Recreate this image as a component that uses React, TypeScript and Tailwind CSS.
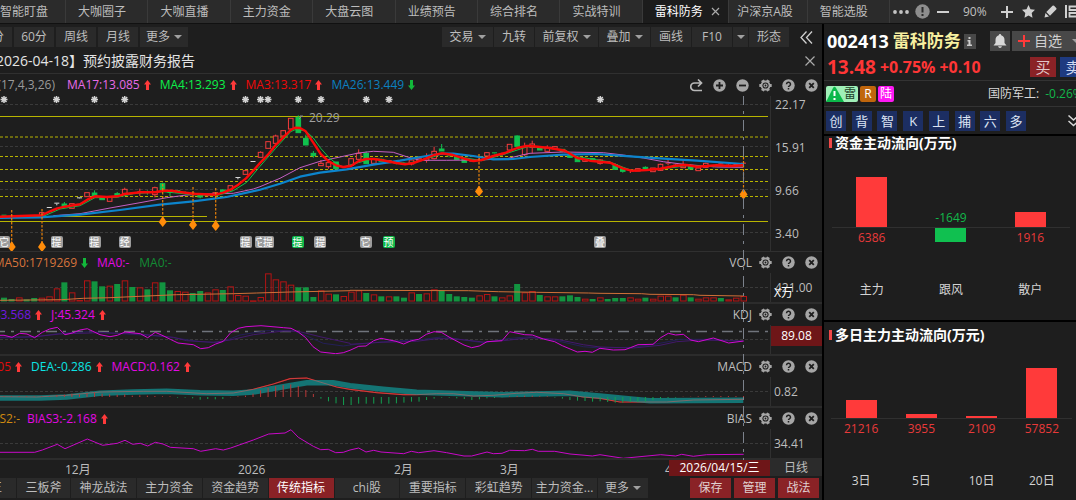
import React from "react";

type Pt = [number, number];
type Dir = "up" | "down";

const CHART_W = 770;
const barX = (i: number) => 4 + i * 7.546;

/* Series samples are stored at three units per pixel, relative to a segment origin. */
const seg = (ox: number, oy: number, pts: Pt[]): Pt[] => pts.map(([x, y]) => [ox + x / 3, oy + y / 3]);
const toPoints = (pts: Pt[]) => pts.map(([x, y]) => `${x.toFixed(1)},${y.toFixed(1)}`).join(" ");

const ma3 = [
  ...seg(0, 90, [[0, 380], [60, 378], [126, 376], [150, 364], [172, 355], [194, 350], [240, 343], [262, 329], [285, 319], [320, 321], [352, 319], [375, 312], [421, 307], [466, 307], [490, 302], [515, 302], [534, 305], [580, 311], [647, 314], [670, 308], [693, 298], [715, 284], [738, 265], [760, 242]]),
  ...seg(260, 90, [[0, 219], [25, 193], [47, 165], [70, 142], [92, 120], [105, 113], [120, 114], [137, 124], [160, 158], [182, 192], [206, 214], [228, 226], [250, 231], [273, 228], [295, 214], [318, 207], [342, 207], [375, 212], [409, 219], [435, 223], [460, 219], [490, 209], [522, 195], [545, 190], [575, 194], [613, 206], [640, 213], [665, 210], [700, 198], [735, 189], [771, 174], [800, 168]]),
  ...seg(530, 90, [[0, 168], [60, 174], [105, 182], [142, 204], [180, 212], [240, 218], [280, 236], [305, 242], [350, 240], [391, 236], [437, 227], [470, 225], [500, 230], [560, 226], [600, 228], [640, 226]]),
];
const ma4 = [
  ...seg(0, 90, [[0, 381], [130, 379], [180, 357], [240, 347], [285, 323], [352, 322], [400, 311], [490, 305], [580, 314], [650, 317], [700, 302], [740, 277], [775, 235]]),
  ...seg(260, 90, [[0, 229], [47, 175], [92, 125], [105, 119], [137, 122], [160, 144], [182, 175], [206, 202], [228, 220], [250, 231], [295, 218], [342, 205], [409, 217], [440, 221], [522, 200], [550, 190], [613, 203], [665, 212], [735, 192], [800, 171]]),
  ...seg(530, 90, [[0, 170], [105, 180], [142, 200], [240, 216], [280, 232], [305, 241], [391, 238], [470, 227], [560, 228], [640, 228]]),
];
const ma26 = [
  ...seg(0, 90, [[0, 384], [120, 382], [240, 374], [360, 360], [480, 344], [580, 334], [680, 321], [740, 308]]),
  ...seg(260, 90, [[0, 299], [60, 281], [120, 260], [180, 248], [260, 238], [340, 224], [420, 212], [500, 198], [545, 191], [580, 191], [640, 198], [700, 208], [760, 207]]),
  ...seg(530, 90, [[0, 201], [100, 194], [200, 192], [300, 199], [400, 206], [500, 212], [640, 222]]),
];
const ma17 = [
  ...seg(0, 90, [[160, 377], [240, 371], [330, 354], [420, 338], [500, 323], [560, 315], [620, 312], [700, 310], [760, 297]]),
  ...seg(260, 90, [[0, 290], [60, 265], [120, 233], [180, 214], [240, 201], [295, 189], [340, 184], [400, 187], [440, 200], [480, 211], [560, 211], [660, 210], [740, 206], [790, 194]]),
  ...seg(530, 90, [[0, 190], [100, 186], [220, 188], [280, 195], [340, 204], [400, 215], [460, 223], [560, 231], [640, 232]]),
];

/* index, colour (r/g/w), body top, body bottom, wick top, wick bottom */
type Candle = [number, "r" | "g" | "w", number, number, number, number];
const candles: Candle[] = [
  [0, "g", 374, 377, 374, 377], [5, "r", 368, 376, 366, 376], [6, "w", 351, 353, 351, 353], [7, "w", 338, 341, 338, 346],
  [8, "g", 342, 348, 336, 354], [9, "r", 341, 355, 341, 355], [10, "w", 322, 324, 322, 324], [11, "r", 308, 320, 308, 320],
  [12, "g", 309, 317, 301, 317], [13, "g", 320, 329, 320, 329], [14, "r", 321, 334, 321, 334], [15, "g", 311, 316, 306, 321],
  [16, "r", 298, 310, 293, 310], [17, "g", 308, 311, 308, 311], [18, "r", 304, 308, 296, 318], [19, "g", 306, 309, 301, 314],
  [20, "r", 293, 314, 290, 322], [21, "g", 281, 300, 278, 303], [22, "g", 306, 309, 304, 318], [23, "g", 302, 307, 302, 307],
  [24, "g", 306, 309, 304, 310], [25, "r", 308, 311, 308, 311], [26, "g", 314, 321, 312, 325], [27, "r", 314, 317, 312, 320],
  [28, "r", 308, 316, 306, 318], [29, "g", 300, 305, 298, 308], [30, "r", 287, 300, 287, 302], [31, "w", 261, 263, 261, 268],
  [32, "r", 242, 253, 240, 253], [33, "w", 213, 215, 213, 215], [34, "r", 187, 202, 184, 202], [35, "r", 155, 175, 155, 175],
  [36, "r", 138, 160, 134, 160], [37, "r", 122, 138, 120, 140], [38, "r", 85, 117, 85, 117], [39, "g", 82, 128, 76, 128],
  [40, "g", 145, 165, 134, 165], [41, "g", 190, 197, 183, 203], [42, "r", 220, 227, 210, 227], [43, "r", 218, 230, 216, 236],
  [44, "g", 216, 236, 216, 236], [45, "r", 228, 231, 228, 232], [46, "r", 206, 226, 204, 228], [47, "r", 190, 208, 178, 208],
  [48, "g", 190, 221, 184, 221], [49, "r", 208, 220, 208, 224], [50, "g", 208, 214, 206, 214], [51, "r", 212, 218, 210, 218],
  [52, "g", 214, 220, 212, 223], [53, "g", 218, 221, 216, 223], [54, "r", 210, 222, 208, 226], [55, "r", 206, 212, 198, 216],
  [56, "r", 206, 211, 190, 218], [57, "r", 184, 206, 170, 208], [58, "g", 177, 183, 162, 183], [59, "g", 196, 200, 194, 202],
  [60, "g", 200, 208, 200, 208], [61, "g", 208, 217, 206, 217], [62, "r", 212, 216, 210, 216], [63, "r", 208, 212, 204, 214],
  [64, "r", 188, 198, 186, 198], [65, "g", 187, 191, 187, 193], [66, "r", 190, 194, 188, 198], [67, "r", 163, 180, 163, 182],
  [68, "g", 138, 169, 136, 169], [69, "r", 170, 194, 158, 198], [70, "r", 162, 172, 152, 190], [71, "g", 172, 180, 170, 180],
  [72, "r", 172, 184, 166, 186], [73, "r", 170, 176, 168, 178], [74, "g", 178, 184, 178, 186], [75, "g", 194, 202, 190, 204],
  [76, "g", 206, 215, 206, 215], [77, "r", 208, 214, 206, 216], [78, "g", 206, 212, 204, 214], [79, "r", 210, 220, 208, 224],
  [80, "r", 214, 218, 214, 218], [81, "g", 224, 238, 220, 238], [82, "g", 236, 244, 236, 248], [83, "r", 240, 243, 238, 249],
  [84, "r", 236, 243, 234, 243], [85, "g", 232, 238, 229, 238], [86, "r", 234, 245, 234, 245], [87, "r", 223, 241, 221, 243],
  [88, "r", 218, 222, 210, 226], [89, "r", 224, 228, 222, 230], [90, "r", 223, 233, 210, 233], [91, "g", 226, 237, 222, 237],
  [92, "r", 234, 242, 232, 242], [93, "r", 220, 232, 218, 234], [94, "g", 226, 230, 226, 232], [95, "r", 220, 224, 218, 226],
  [96, "r", 224, 228, 222, 228], [97, "r", 222, 226, 222, 226], [98, "r", 218, 222, 218, 224],
];

const volume =
  "g143 g147 r142 g148 g144 r143 r139 r115 g97 r127 r150 r91 g94 g109 r107 g102 r91 g111 r112 g118 r97 g97 g121 r123 r125 g129 g123 r127 r118 g120 r109 r135 r137 r151 r141 r70 r88 r94 r104 g112 g112 g141 r121 r131 g133 r138 r125 r121 g129 r133 g139 r139 g139 g143 r127 g132 r130 r118 g121 g132 g139 g141 g143 r136 r132 g139 r142 r136 g102 r127 r123 g135 r139 r139 g139 g136 g141 r146 g147 r142 g147 g144 g144 r142 r146 g143 r146 r137 r137 g142 r134 g142 r146 r142 r142 g144 r148 r143 r138".split(" ");
const volMa = [
  ...seg(0, 250, [[0, 151], [184, 149], [250, 145], [330, 143], [420, 139], [530, 134], [700, 131], [770, 129], [870, 126], [1050, 122]]),
  ...seg(350, 250, [[0, 121], [355, 122], [445, 125], [560, 127], [715, 129], [750, 130]]),
  ...seg(600, 250, [[0, 130], [125, 131], [150, 133], [280, 134], [300, 136], [430, 138]]),
];

const kdjJ = [
  ...seg(0, 250, [[0, 256], [12, 256], [36, 262], [59, 250], [81, 252], [104, 263], [127, 247], [149, 237], [172, 232], [195, 254], [217, 249], [240, 240], [262, 236], [300, 254], [330, 260], [352, 256], [375, 246], [421, 251], [443, 263], [466, 247], [489, 257], [511, 268], [534, 279], [580, 284], [602, 296], [625, 293], [647, 282], [670, 274], [692, 248], [715, 235], [738, 230], [783, 227], [851, 233], [873, 235], [895, 246], [917, 263], [939, 290], [962, 306], [1007, 311], [1030, 308]]),
  ...seg(350, 250, [[0, 301], [26, 289], [48, 288], [71, 272], [93, 265], [138, 274], [161, 282], [184, 272], [206, 268], [229, 253], [252, 245], [274, 247], [297, 261], [342, 285], [365, 293], [388, 288], [411, 275], [456, 272], [479, 245], [524, 254], [547, 255], [580, 267], [614, 275], [637, 287], [682, 306], [705, 304], [727, 307]]),
  ...seg(600, 250, [[0, 295], [40, 300], [75, 299], [91, 293], [114, 284], [159, 283], [182, 263], [205, 250], [227, 255], [250, 253], [272, 270], [295, 275], [340, 264], [386, 279], [431, 273]]),
];
const kdjK = [
  ...seg(0, 250, [[0, 262], [104, 260], [180, 252], [300, 248], [420, 252], [520, 262], [560, 272], [640, 277], [690, 270], [760, 254], [850, 243], [895, 244], [960, 260], [1050, 280]]),
  ...seg(350, 250, [[0, 283], [93, 277], [200, 274], [260, 266], [310, 266], [400, 276], [460, 272], [540, 263], [620, 268], [700, 284]]),
  ...seg(600, 250, [[0, 291], [100, 294], [180, 286], [230, 275], [300, 270], [430, 273]]),
];
const kdjD = [
  ...seg(0, 250, [[0, 264], [104, 261], [180, 250], [270, 245], [380, 252], [500, 260], [600, 275], [660, 278], [720, 255], [800, 242], [880, 242], [920, 258], [970, 280], [1030, 288]]),
  ...seg(350, 250, [[0, 285], [100, 275], [220, 268], [280, 260], [340, 270], [400, 278], [470, 266], [540, 260], [620, 272], [700, 290]]),
  ...seg(600, 250, [[0, 294], [100, 292], [180, 280], [240, 268], [330, 268], [430, 274]]),
];

const macdHist = [
  2, 2, 2, 2, 2, 2, 2, 6, 7, 10, 8, 12, 14, 10, 8, 7, 8, 4, 5, 4, 3, 2, 2, -2, -2, -4, -8, -6, -7, -6, -1, 2, 4, 10, 20, 28, 32, 36, 38, 33, 21, 9, -5, -13, -19, -24, -24,
  -20, -20, -20, -20, -20, -19, -17, -14, -14, -9, -5, -2, -2, -4, -6, -9, -7, -4, -3, -1, 2, 3, 4, 4, 2, 2, -2, -5, -9, -11, -12, -14, -13, -15, -17, -17, -15, -15, -14, -10, -5, -3, -2,
  1, 1, 2, 3, 3, 3, 3, 3, 3,
];
const dea = [
  ...seg(0, 250, [[0, 444], [120, 444], [200, 441], [300, 430], [400, 426], [500, 424], [600, 428], [700, 430], [760, 426], [850, 410], [920, 398], [1000, 398]]),
  ...seg(350, 250, [[0, 407], [100, 418], [200, 427], [350, 431], [460, 434], [560, 432], [660, 430], [740, 437]]),
  ...seg(600, 250, [[0, 438], [100, 448], [150, 452], [430, 451]]),
];
const dif = [
  ...seg(0, 250, [[0, 440], [110, 441], [200, 436], [300, 426], [430, 424], [500, 424], [620, 431], [700, 429], [760, 418], [820, 402], [870, 386], [920, 384], [960, 396], [1010, 411]]),
  ...seg(350, 250, [[0, 418], [80, 428], [160, 434], [200, 434], [260, 431], [310, 431], [370, 438], [430, 436], [500, 430], [560, 427], [640, 431], [700, 441]]),
  ...seg(600, 250, [[0, 445], [60, 456], [200, 456], [280, 450], [430, 448]]),
];

const bias = [
  ...seg(0, 250, [[0, 607], [104, 607], [127, 600], [172, 583], [195, 596], [262, 567], [308, 586], [352, 580], [375, 571], [398, 583], [421, 580], [443, 588], [466, 577], [489, 582], [511, 592], [580, 596], [602, 604], [647, 596], [670, 600], [692, 594], [760, 570], [806, 552], [855, 549], [873, 539], [895, 562], [940, 589], [962, 599], [985, 598], [1007, 608], [1030, 607]]),
  ...seg(350, 250, [[0, 600], [26, 594], [48, 606], [71, 601], [93, 606], [161, 611], [184, 604], [206, 608], [252, 602], [290, 608], [342, 618], [365, 618], [411, 606], [430, 611], [456, 610], [479, 601], [524, 602], [547, 598], [565, 604], [614, 604], [660, 612], [705, 616], [727, 618]]),
  ...seg(600, 250, [[0, 614], [70, 625], [182, 614], [227, 618], [245, 613], [280, 619], [320, 614], [431, 613]]),
];

const stars = [4, 56.5, 94.5, 124.7, 245.5, 260.5, 268, 298.3, 321, 366.3, 389, 600.3];
const signals: [number, number, number][] = [
  [11.7, 210, 247], [42, 209, 247], [162.7, 184, 222], [193, 187, 225], [215.7, 188, 226], [479, 154, 191.5], [743.5, 157, 194.5],
];
const events: [number, string, boolean][] = [
  [4, "它", false], [56.5, "提", false], [94.5, "提", false], [124.7, "经", false], [245.5, "提", false], [260.5, "它", false],
  [268, "提", false], [297.5, "提", true], [320.5, "提", false], [365.5, "它", false], [388.5, "预", true], [600, "叠", false],
];

function Caret() {
  return (
    <svg className="h-1 w-2 shrink-0" viewBox="0 0 8 4" aria-hidden="true">
      <path d="M0 0h8L4 4z" fill="#a0a0a0" />
    </svg>
  );
}

function Arrow({ dir }: { dir: Dir }) {
  return (
    <svg className="h-[10px] w-[7px] shrink-0" viewBox="0 0 7 10" aria-hidden="true">
      {dir === "up" ? <path d="M3.5 0L7 4.5H5V10H2V4.5H0z" fill="#ff3a3a" /> : <path d="M3.5 10L7 5.5H5V0H2v5.500H0z" fill="#12b83a" />}
    </svg>
  );
}

function Dot({ kind }: { kind: "plus" | "minus" | "help" | "close" }) {
  return (
    <svg className="size-[13px]" viewBox="0 0 13 13" aria-hidden="true">
      <circle cx="6.5" cy="6.5" r="6.200" fill="#a6a6a6" />
      <g stroke="#1e1e1e" strokeWidth="1.800" fill="none">
        {kind === "plus" && <path d="M6.500 3v7M3 6.500h7" />}
        {kind === "minus" && <path d="M3 6.500h7" />}
        {kind === "close" && <path d="M4.200 4.200l4.600 4.600M8.800 4.200l-4.600 4.600" />}
        {kind === "help" && <path d="M4.500 5.200a2 1.900 0 1 1 3 1.600q-1 .5-1 1.300M6.500 9v1.600" strokeWidth="1.500" />}
      </g>
    </svg>
  );
}

function Gear() {
  return (
    <svg className="size-[13px]" viewBox="0 0 13 13" aria-hidden="true">
      <g fill="#a6a6a6">
        {[0, 60, 120].map((a) => (
          <rect key={a} x="0.300" y="4.900" width="12.400" height="3.200" rx="0.600" transform={`rotate(${a} 6.5 6.5)`} />
        ))}
        <circle cx="6.5" cy="6.5" r="4.900" />
      </g>
      <circle cx="6.5" cy="6.5" r="3.100" fill="#1e1e1e" />
      <circle cx="6.5" cy="6.5" r="1.500" fill="none" stroke="#a6a6a6" strokeWidth="1.200" />
    </svg>
  );
}

function PanelTools() {
  return (
    <>
      <button aria-label="设置"><Gear /></button>
      <button aria-label="帮助"><Dot kind="help" /></button>
      <button aria-label="关闭"><Dot kind="close" /></button>
    </>
  );
}

function Reading({ text, color, dir }: { text: string; color: string; dir?: Dir }) {
  return (
    <span className={`flex shrink-0 items-center gap-1 whitespace-nowrap ${color}`}>
      {text}
      {dir && <Arrow dir={dir} />}
    </span>
  );
}

function Grid({ ys }: { ys: number[] }) {
  return (
    <g stroke="#3a3a3a" strokeWidth="1" strokeDasharray="3 2">
      {ys.map((y) => <line key={y} x1="0" x2="768" y1={y} y2={y} />)}
    </g>
  );
}

function Plot({ top, height, children }: { top: number; height: number; children: React.ReactNode }) {
  return (
    <svg className="block h-full w-full" viewBox={`0 ${top} ${CHART_W} ${height}`} preserveAspectRatio="none" aria-hidden="true">
      {children}
    </svg>
  );
}

function SubPanel({ name, lead, leadWidth, leadColor, leadDir, rest, axis, children }: {
  name: string; lead: string; leadWidth: string; leadColor: string; leadDir?: Dir;
  rest: React.ReactNode; axis: React.ReactNode; children: React.ReactNode;
}) {
  return (
    <section className="flex h-[52px] shrink-0 flex-col border-b-2 border-[#2c2c2c]">
      <header className="flex h-[21px] shrink-0 items-center pr-1">
        <div className={`flex shrink-0 justify-end overflow-hidden ${leadWidth}`}>
          <Reading text={lead} color={leadColor} dir={leadDir} />
        </div>
        <div className="flex flex-1 items-center gap-2">{rest}</div>
        <div className="flex items-center gap-[10px]">
          <h2 className="-mr-[3px]">{name}</h2>
          <PanelTools />
        </div>
      </header>
      <div className="flex min-h-0 flex-1">
        <div className="min-w-0 flex-1">{children}</div>
        <div className="relative flex w-[52px] items-center border-l border-[#303030]">{axis}</div>
      </div>
    </section>
  );
}

function ToolButton({ children, className = "" }: { children: React.ReactNode; className?: string }) {
  return (
    <button className={`flex h-5 shrink-0 items-center justify-center gap-1 whitespace-nowrap bg-[#2a2a2a] ${className}`}>{children}</button>
  );
}

const tabs = ["大咖圈子", "大咖直播", "主力资金", "大盘云图", "业绩预告", "综合排名", "实战特训", "雷科防务", "沪深京A股", "智能选股"];

function TopBar() {
  return (
    <div className="flex h-6 shrink-0 border-b border-[#111] bg-[#2b2b2b]">
      <nav className="flex min-w-0 flex-1">
        <a href="#" className="flex w-[66px] shrink-0 items-center whitespace-nowrap border-r border-[#3a3a3a]">智能盯盘</a>
        {tabs.map((t) =>
          t === "雷科防务" ? (
            <div key={t} className="flex min-w-0 flex-1 items-center justify-between border-r border-[#3a3a3a] bg-[#1c1c1c] pl-3 pr-1 text-white">
              <a href="#" aria-current="page" className="whitespace-nowrap">{t}</a>
              <button aria-label="关闭标签" className="mr-1">
                <svg className="size-[9px]" viewBox="0 0 9 9"><path d="M1 1l7 7M8 1L1 8" stroke="#aaa" strokeWidth="1.200" /></svg>
              </button>
            </div>
          ) : (
            <a key={t} href="#" className={`flex min-w-0 flex-1 items-center whitespace-nowrap border-r border-[#3a3a3a] ${t === "沪深京A股" ? "pl-2" : "pl-3"}`}>{t}</a>
          ),
        )}
      </nav>
      <div className="flex w-[186px] shrink-0 items-center overflow-hidden pl-[3px] text-[#c0c0c0]">
        <button aria-label="更多标签" className="w-4">
          <svg className="h-1 w-4" viewBox="0 0 16 4"><g fill="#c4c4c4"><circle cx="2" cy="2" r="1.900" /><circle cx="8" cy="2" r="1.900" /><circle cx="14" cy="2" r="1.900" /></g></svg>
        </button>
        <button aria-label="提示" className="ml-[6px]">
          <svg className="size-[15px]" viewBox="0 0 15 15"><circle cx="7.500" cy="7.500" r="7.200" fill="#8e8e8e" /><path d="M7.500 3v5.500M7.500 10v2" stroke="#2b2b2b" strokeWidth="2" /></svg>
        </button>
        <button aria-label="缩小" className="ml-[7px]">
          <svg className="size-3" viewBox="0 0 12 12"><path d="M0 6h12" stroke="#d0d0d0" strokeWidth="2" /></svg>
        </button>
        <span className="ml-[14px] w-6">90%</span>
        <button aria-label="放大" className="ml-[14px]">
          <svg className="size-3" viewBox="0 0 12 12"><path d="M0 6h12M6 0v12" stroke="#d0d0d0" strokeWidth="2" /></svg>
        </button>
        <button aria-label="收藏" className="ml-[9px]">
          <svg className="size-[13px]" viewBox="0 0 24 24"><path d="M12 0l3.700 7.900 8.300 1-6.100 5.900 1.500 8.700L12 19.300l-7.400 4.200 1.500-8.700L0 8.900l8.300-1z" fill="#d0d0d0" /></svg>
        </button>
        <button aria-label="编辑" className="ml-[9px]">
          <svg className="size-[13px]" viewBox="0 0 13 13"><path d="M0.500 12.500l1-4.500 3.500 3.500zM2.300 7L8.500 0.800q.8-.8 1.600 0l2.100 2.100q.8.800 0 1.600L6 10.700z" fill="#d0d0d0" /></svg>
        </button>
        <button aria-label="布局" className="ml-2 shrink-0">
          <svg className="h-[13px] w-4" viewBox="0 0 16 13"><path d="M1 0v13" stroke="#d0d0d0" strokeWidth="2" /><path d="M4.500 1.500h9v3.500h-9zM4.500 8h9v3.500h-9z" fill="none" stroke="#d0d0d0" strokeWidth="1.800" /></svg>
        </button>
      </div>
    </div>
  );
}

function Toolbar() {
  return (
    <div className="flex h-6 shrink-0 items-center justify-between pt-[2px]">
      <div className="flex gap-[2px]">
        <div className="flex h-5 w-3 shrink-0 justify-end overflow-hidden bg-[#2a2a2a]">
          <button className="shrink-0 whitespace-nowrap pr-2">30分</button>
        </div>
        <ToolButton className="w-10">60分</ToolButton>
        <ToolButton className="w-10">周线</ToolButton>
        <ToolButton className="w-10">月线</ToolButton>
        <ToolButton className="w-12">更多<Caret /></ToolButton>
      </div>
      <div className="flex items-center gap-[1px] pr-[9px]">
        <ToolButton className="w-[51px]">交易<Caret /></ToolButton>
        <ToolButton className="w-10">九转</ToolButton>
        <ToolButton className="w-[63px]">前复权<Caret /></ToolButton>
        <ToolButton className="w-[51px]">叠加<Caret /></ToolButton>
        <ToolButton className="w-10">画线</ToolButton>
        <ToolButton className="w-10">F10</ToolButton>
        <ToolButton className="w-[15px]"><Caret /></ToolButton>
        <ToolButton className="w-10">形态</ToolButton>
        <button aria-label="展开" className="ml-[10px]">
          <svg className="size-[13px]" viewBox="0 0 13 13"><path d="M6.500 0.500L1 6.500l5.500 6M12 0.500L6.500 6.500l5.500 6" fill="none" stroke="#d0d0d0" strokeWidth="1.300" /></svg>
        </button>
      </div>
    </div>
  );
}

const candleColor = { r: "#f23c3c", g: "#10c24e", w: "#d8d8d8" };

function MainChart() {
  return (
    <section className="flex min-h-[178px] flex-1 flex-col border-b border-[#303030]">
      <header className="flex h-[22px] shrink-0 items-center pr-1">
        <div className="flex w-[55px] shrink-0 justify-end overflow-hidden">
          <span className="shrink-0 text-[#9a9a9a]">MA(17,4,3,26)</span>
        </div>
        <div className="flex flex-1 gap-[9px] pl-3">
          <Reading text="MA17:13.085" color="text-[#e86be8]" dir="up" />
          <Reading text="MA4:13.293" color="text-[#0cf04a]" dir="up" />
          <Reading text="MA3:13.317" color="text-[#f00808]" dir="up" />
          <Reading text="MA26:13.449" color="text-[#0c80c0]" dir="down" />
        </div>
        <div className="flex items-center gap-[10px]">
          <button aria-label="重做">
            <svg className="size-[13px]" viewBox="0 0 13 13"><path d="M12 11.500H4.500a3.500 3.500 0 0 1 0-7.500H11M8 0.500L11.500 4 8 7.500" fill="none" stroke="#b8b8b8" strokeWidth="1.700" /></svg>
          </button>
          <button aria-label="放大图表"><Dot kind="plus" /></button>
          <button aria-label="缩小图表"><Dot kind="minus" /></button>
          <PanelTools />
        </div>
      </header>
      <div className="flex min-h-0 flex-1">
        <div className="relative min-w-0 flex-1">
          <div className="absolute inset-0">
            <Plot top={96} height={155}>
              <Grid ys={[104.5, 146.5, 189.5, 232.5]} />
              <g stroke="#b8b400" strokeWidth="1">
                <path d="M0 116.500H768" />
                <path d="M0 221.500H768" />
                <path d="M0 216.500H207" />
                <path d="M0 137H768M0 156.500H768M0 169.500H768M0 181.500H768M0 196.500H768" strokeDasharray="3 2" />
              </g>
              {stars.map((x) => (
                <g key={x} stroke="#d4d4d4" strokeWidth="1.500">
                  <path d={`M${x - 3.5} 99.500h7M${x} 96v7M${x - 2.5} 97l5 5M${x + 2.5} 97l-5 5`} />
                </g>
              ))}
              {candles.map(([i, c, t, b, wt, wb]) => {
                const x = barX(i);
                const y = 90 + t / 3;
                const h = Math.max((b - t) / 3, 1);
                return (
                  <g key={i} stroke={candleColor[c]} strokeWidth="1">
                    <path d={`M${x} ${90 + wt / 3}V${y}M${x} ${y + h}V${90 + wb / 3}`} />
                    {h <= 1.5 ? (
                      <path d={`M${x - 2.5} ${y + 0.5}h5`} />
                    ) : (
                      <rect x={x - 2.3} y={y} width="4.600" height={h} fill={c === "g" ? candleColor.g : "#1e1e1e"} />
                    )}
                  </g>
                );
              })}
              <g fill="none" strokeLinejoin="round">
                <polyline points={toPoints(ma17)} stroke="#c35fc3" strokeWidth="1" />
                <polyline points={toPoints(ma4)} stroke="#12c24a" strokeWidth="1" />
                <polyline points={toPoints(ma26)} stroke="#0c84cc" strokeWidth="2.200" />
                <polyline points={toPoints(ma3)} stroke="#fa0808" strokeWidth="2.400" />
              </g>
              {signals.map(([x, from, y]) => (
                <g key={x}>
                  <path d={`M${x} ${from}V${y - 4}`} stroke="#e8820c" strokeWidth="1.200" strokeDasharray="2.500 1.500" />
                  <path d={`M${x} ${y - 6}l4 6-4 5-4-5z`} fill="#ff8c0a" />
                </g>
              ))}
              <path d="M299 119l3-3M300 116h3" stroke="#888" strokeWidth="1" />
            </Plot>
          </div>
          <span className="absolute top-[14px] leading-4 text-[#a0a0a0]" style={{ left: `${(309 / CHART_W) * 100}%` }}>20.29</span>
          {events.map(([x, t, hot]) => (
            <span
              key={x}
              className={`absolute bottom-[3px] flex size-3 -translate-x-1/2 items-center justify-center rounded-xs text-[10px] leading-3 text-white ${hot ? "bg-[#10b84a]" : "bg-[#9c9c9c]"}`}
              style={{ left: `${(x / CHART_W) * 100}%` }}
            >
              {t}
            </span>
          ))}
        </div>
        <div className="flex w-[52px] shrink-0 flex-col justify-between border-l border-[#303030] pb-[9px] pl-1 pt-px leading-4">
          <span>22.17</span>
          <span>15.91</span>
          <span>9.66</span>
          <span>3.40</span>
        </div>
      </div>
    </section>
  );
}

function SubCharts() {
  return (
    <>
      <SubPanel
        name="VOL" lead="MA50:1719269" leadWidth="w-[88px]" leadColor="text-[#d8743c]" leadDir="down"
        rest={<div className="flex gap-[10px] pl-[9px]"><Reading text="MA0:-" color="text-[#e408e4]" /><Reading text="MA0:-" color="text-[#128c34]" /></div>}
        axis={<><span className="pl-1">421.00</span><span className="absolute left-[3px] top-3 leading-4 text-white">X万</span></>}
      >
        <Plot top={273} height={29}>
          <Grid ys={[287.5]} />
          {volume.map((v, i) => {
            const y = 250 + Number(v.slice(1)) / 3;
            return v[0] === "g" ? (
              <rect key={i} x={barX(i) - 3} y={y} width="6" height={301.5 - y} fill="#129440" />
            ) : (
              <rect key={i} x={barX(i) - 2.5} y={y + 0.5} width="5.500" height={Math.max(301 - y - 0.5, 0.5)} fill="none" stroke="#b41414" strokeWidth="1" />
            );
          })}
          <polyline points={toPoints(volMa)} fill="none" stroke="#d07038" strokeWidth="1" />
        </Plot>
      </SubPanel>
      <SubPanel
        name="KDJ" lead="D:43.568" leadWidth="w-[42px]" leadColor="text-[#7418e0]" leadDir="up"
        rest={<div className="pl-[9px]"><Reading text="J:45.324" color="text-[#e408e4]" dir="up" /></div>}
        axis={<span className="flex h-5 w-full -translate-y-1 items-center justify-center bg-[#6e1618] text-white">89.08</span>}
      >
        <Plot top={325} height={29}>
          <Grid ys={[339.5]} />
          <line x1="-6" x2="768" y1="331.5" y2="331.5" stroke="#70747c" strokeWidth="1.500" strokeDasharray="11 6 3 6" />
          <g fill="none" strokeWidth="1">
            <polyline points={toPoints(kdjD)} stroke="#241e58" />
            <polyline points={toPoints(kdjK)} stroke="#42186c" />
            <polyline points={toPoints(kdjJ)} stroke="#d408d4" />
          </g>
        </Plot>
      </SubPanel>
      <SubPanel
        name="MACD" lead="DIF:-0.205" leadWidth="w-[22px]" leadColor="text-[#e00c0c]" leadDir="up"
        rest={<div className="flex gap-[9px] pl-[9px]"><Reading text="DEA:-0.286" color="text-[#0ce4e4]" dir="up" /><Reading text="MACD:0.162" color="text-[#e408e4]" dir="up" /></div>}
        axis={<span className="pl-[3px]">0.82</span>}
      >
        <Plot top={377} height={29}>
          <Grid ys={[391.5]} />
          <polyline points={toPoints(dif)} fill="none" stroke="#d80c0c" strokeWidth="1.200" />
          <polyline points={toPoints(dea)} fill="none" stroke="#147474" strokeWidth="5.500" />
          <polyline points={toPoints(dif)} fill="none" stroke="#c06464" strokeWidth="1" strokeOpacity="0.600" />
          {macdHist.map((h, i) => (
            <path key={i} d={`M${barX(i)} 397v${-h / 3}`} stroke={h > 0 ? "#b83838" : "#12a050"} strokeWidth="1" />
          ))}
        </Plot>
      </SubPanel>
      <SubPanel
        name="BIAS" lead="BIAS2:-" leadWidth="w-5" leadColor="text-[#d08a10]"
        rest={<div className="pl-[7px]"><Reading text="BIAS3:-2.168" color="text-[#e408e4]" dir="up" /></div>}
        axis={<span className="pl-[3px]">34.41</span>}
      >
        <Plot top={429} height={29}>
          <Grid ys={[443.5]} />
          <polyline points={toPoints(bias)} fill="none" stroke="#c808c8" strokeWidth="1" />
        </Plot>
      </SubPanel>
    </>
  );
}

const months: [number, string][] = [[65, "12月"], [238, "2026"], [394, "2月"], [500, "3月"], [665, "4月"]];

function DateAxis() {
  return (
    <div className="flex h-[18px] shrink-0">
      <div className="relative flex min-w-0 flex-1 justify-end">
        {months.map(([x, t]) => (
          <span key={t} className="absolute top-px leading-[18px]" style={{ left: `${(x / CHART_W) * 100}%` }}>{t}</span>
        ))}
        <span className="relative flex h-4 w-[101px] items-center justify-center bg-[#6e1618] text-white">2026/04/15/三</span>
      </div>
      <button className="h-4 w-[52px] shrink-0 bg-[#2b2b2b] leading-4">日线</button>
    </div>
  );
}

const strategies = ["神龙战法", "主力资金", "资金趋势", "传统指标", "chi股", "重要指标", "彩虹趋势", "主力资金..."];

function BottomBar() {
  return (
    <div className="flex h-[22px] shrink-0 items-start justify-between pr-[3px]">
      <div className="flex gap-[1px]">
        <div className="flex h-5 w-4 shrink-0 justify-end overflow-hidden bg-[#2a2a2a]">
          <button className="shrink-0 whitespace-nowrap pr-[14px]">擒龙王</button>
        </div>
        <ToolButton className="w-[53px]">三板斧</ToolButton>
        <div className="flex w-[526px] gap-[1px]">
          {strategies.map((s) => (
            <ToolButton key={s} className={s === "传统指标" ? "min-w-0 flex-1 bg-[#8a2226]! text-white" : "min-w-0 flex-1"}>{s}</ToolButton>
          ))}
        </div>
        <ToolButton className="w-[50px]">更多<Caret /></ToolButton>
      </div>
      <div className="flex gap-[3px]">
        {["保存", "管理", "战法"].map((t) => (
          <button key={t} className="h-5 w-[41px] bg-[#8a2226] text-[#e0d0d0]">{t}</button>
        ))}
      </div>
    </div>
  );
}

interface FlowBar { label: string; value: number; px: number }

function FlowChart({ title, data, padClass, topClass }: { title: string; data: FlowBar[]; padClass: string; topClass: string }) {
  return (
    <section className="flex flex-col">
      <h2 className="flex h-[14px] items-center gap-[3px] pl-[5px] text-[14px] font-bold leading-[14px] text-white">
        <span className="h-[10px] w-[3px] bg-[#f04848]" />
        {title}
      </h2>
      <div className={`flex ${padClass}`}>
        {data.map((d) => (
          <div key={d.label} className="flex flex-1 flex-col items-center">
            <div className={`flex flex-col items-center justify-end ${topClass}`}>
              {d.value < 0 ? (
                <span className="leading-[18px] text-[#12b84a]">{d.value}</span>
              ) : (
                <span className="w-[31px] bg-[#ff3a3a]" style={{ height: d.px }} />
              )}
            </div>
            <div className="h-px self-stretch bg-[#303030]" />
            <div className="flex h-[52px] flex-col items-center">
              {d.value < 0 ? (
                <span className="w-[31px] bg-[#10c050]" style={{ height: d.px }} />
              ) : (
                <span className="leading-5 text-[#e83a3a]">{d.value}</span>
              )}
            </div>
            <span className="leading-5 text-[#d4d4d4]">{d.label}</span>
          </div>
        ))}
      </div>
    </section>
  );
}

function QuotePanel() {
  return (
    <aside className="flex w-[254px] shrink-0 flex-col overflow-hidden border-l-2 border-black">
      <div className="flex flex-col border-b border-[#333] pl-[3px]">
        <div className="flex h-[33px] items-center pt-px">
          <h1 className="flex items-center gap-1 whitespace-nowrap font-bold">
            <span className="text-[18px] leading-6 text-white">002413</span>
            <span className="text-[17px] leading-6 text-[#f8f0a0]">雷科防务</span>
          </h1>
          <button aria-label="资料" className="ml-[3px] flex h-[15px] w-3 items-center justify-center bg-[#484848]">
            <svg className="h-[9px] w-[5px]" viewBox="0 0 5 9"><path d="M1.500 0h2v2h-2zM0.500 3h3v4.500H5V9H0V7.500h1.500v-3h-1z" fill="#ccc" /></svg>
          </button>
          <button aria-label="提醒" className="ml-auto flex h-5 w-5 shrink-0 items-center justify-center bg-[#484848]">
            <svg className="size-[14px]" viewBox="0 0 14 14"><path d="M7 0q1.200 0 1.200 1.300Q11.500 2.200 11.500 6v3L13.500 11.500H.5L2.500 9V6q0-3.800 3.300-4.700Q5.800 0 7 0zM5 12.300h4Q8.500 14 7 14t-2-1.700z" fill="#d8d8d8" /></svg>
          </button>
          <button className="ml-[2px] flex h-5 w-16 shrink-0 items-center gap-1 bg-[#484848] pl-[6px] text-[14px] text-[#d0d0d0]">
            <svg className="size-3 shrink-0" viewBox="0 0 12 12"><path d="M0 6h12M6 0v12" stroke="#ff3a3a" strokeWidth="2" /></svg>
            <span className="shrink-0">自选</span>
            <span className="ml-[6px] shrink-0"><Caret /></span>
          </button>
        </div>
        <div className="flex h-[23px] items-start font-bold leading-5 text-[#ff3636]">
          <span className="text-[19px]">13.48</span>
          <span className="ml-1 text-[16px]">+0.75%</span>
          <span className="ml-1 text-[16px]">+0.10</span>
          <button className="ml-auto h-5 w-[26px] shrink-0 bg-[#8a2226] text-[15px] font-normal leading-5 text-[#e0c8c8]">买</button>
          <div className="ml-1 w-4 shrink-0 overflow-hidden">
            <button className="block h-5 w-[26px] bg-[#1e3a80] text-[15px] font-normal leading-5 text-[#d0d8f0]">卖</button>
          </div>
        </div>
      </div>
      <div className="flex h-[26px] shrink-0 items-center gap-[2px] border-b border-[#333] pl-[2px]">
        <span className="flex h-4 w-8 shrink-0 items-center rounded-xs bg-[#a0f0b8] text-[#1e4028]">
          <svg className="h-4 w-[18px]" viewBox="0 0 18 16"><path d="M0 16L7 2q1.500-2.500 3 0l8 14z" fill="#0cb84a" /><path d="M8.500 5v5M8.500 12v2" stroke="#fff" strokeWidth="2" /></svg>
          雷
        </span>
        <span className="flex h-4 w-4 shrink-0 items-center justify-center rounded-xs bg-[#c0660c] text-white">R</span>
        <span className="flex h-4 w-4 shrink-0 items-center justify-center rounded-xs bg-[#ff18f4] text-white">陆</span>
        <div className="ml-auto flex w-[88px] shrink-0 gap-[6px] overflow-hidden whitespace-nowrap">
          <span className="text-[#d8d8d8]">国防军工:</span>
          <span className="text-[#12b84a]">-0.26%</span>
        </div>
      </div>
      <div className="flex h-[29px] shrink-0 items-center justify-between border-b-2 border-black pl-[2px]">
        <div className="flex w-[200px] justify-between">
          {["创", "背", "智", "K", "上", "捕", "六", "多"].map((t) => (
            <button key={t} className="size-5 shrink-0 bg-[#1c2e62] text-[13px] leading-5 text-[#dce4f4]">{t}</button>
          ))}
        </div>
        <button aria-label="展开标签" className="w-2 shrink-0 overflow-hidden">
          <svg className="h-3 w-[11px]" viewBox="0 0 11 12"><path d="M0.500 0.500l5 4.500 5-4.500M0.500 6l5 4.500 5-4.500" fill="none" stroke="#d8d8d8" strokeWidth="1.500" /></svg>
        </button>
      </div>
      <div className="h-[186px] shrink-0 border-b-2 border-black">
        <FlowChart
          title="资金主动流向(万元)"
          padClass="pl-2 pr-[6px]"
          topClass="h-[77px]"
          data={[{ label: "主力", value: 6386, px: 50 }, { label: "跟风", value: -1649, px: 14 }, { label: "散户", value: 1916, px: 15 }]}
        />
      </div>
      <div className="flex-1 pt-[6px]">
        <FlowChart
          title="多日主力主动流向(万元)"
          padClass="pl-[7px] pr-1"
          topClass="h-[76px]"
          data={[{ label: "3日", value: 21216, px: 18 }, { label: "5日", value: 3955, px: 4 }, { label: "10日", value: 2109, px: 2 }, { label: "20日", value: 57852, px: 50 }]}
        />
      </div>
    </aside>
  );
}

export default function App() {
  return (
    <div className="flex h-screen min-h-[500px] flex-col overflow-hidden bg-[#1e1e1e] font-['Open_Sans','Noto_Sans_CJK_SC',sans-serif] text-[12px] leading-4 text-[#bdbdbd]">
      <TopBar />
      <div className="flex min-h-0 flex-1">
        <main className="flex min-w-0 flex-1 flex-col">
          <Toolbar />
          <div className="flex h-[26px] shrink-0 items-center justify-between border-b border-[#303030] pr-[7px]">
            <div className="flex w-[195px] justify-end overflow-hidden">
              <p className="shrink-0 whitespace-nowrap text-[14px] leading-5 text-[#e4e4e4]">【2026-04-18】预约披露财务报告</p>
            </div>
            <button aria-label="关闭公告">
              <svg className="size-[10px]" viewBox="0 0 10 10"><path d="M.5.5l9 9M9.500.5l-9 9" stroke="#aaa" strokeWidth="1.200" /></svg>
            </button>
          </div>
          <div className="relative flex min-h-0 flex-1 flex-col">
            <MainChart />
            <SubCharts />
            <svg className="pointer-events-none absolute inset-x-0 bottom-0 top-[22px] h-[calc(100%-22px)] w-full" viewBox="0 0 822 364" preserveAspectRatio="none" aria-hidden="true">
              <path d="M743.500 -2V364" stroke="#7c828c" strokeWidth="1" strokeDasharray="11 6 3 6" />
            </svg>
          </div>
          <DateAxis />
          <BottomBar />
        </main>
        <QuotePanel />
      </div>
    </div>
  );
}
